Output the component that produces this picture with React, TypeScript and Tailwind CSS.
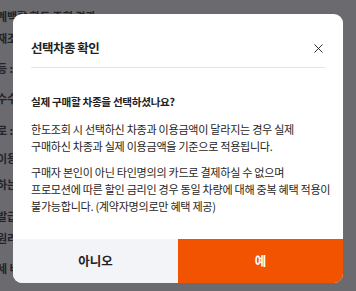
import { X } from "lucide-react";

const bgLines = [
  { t: "계백할 한도 조회 결과", y: "mt-[8px]" },
  { t: "재조회 가능 여부 안내", y: "mt-[6px]" },
  { t: "등 : 프로모션 적용 불가", y: "mt-[14px]" },
  { t: "수수료 안내", y: "mt-[14px]" },
  { t: "로 : 일시불 결제", y: "mt-[16px]" },
  { t: "이용 금액 안내", y: "mt-[12px]" },
  { t: "하는 경우 적용", y: "mt-[10px]" },
  { t: "발급 관련 안내", y: "mt-[16px]" },
  { t: "원리금 상환 안내", y: "mt-[6px]" },
  { t: "세 비용이 추가로 발생할 수 있습니다.", y: "mt-[14px]" },
];

export default function App() {
  return (
    <div className="relative w-[356px] h-[291px] overflow-hidden bg-white font-['Noto_Sans_CJK_KR','Noto_Sans',sans-serif]">
      {/* page behind the dialog */}
      <div className="flex flex-col text-[11px] leading-[16px] text-[#444] font-bold -ml-[3px]">
        {bgLines.map((l, i) => (
          <div key={i} className={l.y}>{l.t}</div>
        ))}
        <div className="mt-[16px] pl-[8px]">일정 하락 시 금융거래 관련된 불이익이 발생할 수 있습니다.</div>
      </div>
      <div className="absolute inset-0 bg-[#0e0e16]/[0.62]" />

      {/* dialog */}
      <div className="absolute left-[13px] top-[14px] w-[330px] h-[269px] bg-white rounded-[9px] overflow-hidden flex flex-col text-[#222]">
        <div className="mx-[18px] pt-[25px] pb-[10px] border-b border-[#e3e3e8] flex items-center justify-between">
          <h2 className="text-[12.5px] leading-[18px] font-bold tracking-[-0.5px]">선택차종 확인</h2>
          <X size={15} strokeWidth={1.5} className="-mr-[1px] text-[#222]" />
        </div>
        <div className="px-[18px] pt-[25px] flex-1 tracking-[-0.3px]">
          <p className="text-[10.6px] leading-[17px] font-bold">실제 구매할 차종을 선택하셨나요?</p>
          <p className="mt-[11px] text-[11.1px] leading-[17px] text-[#262626] whitespace-nowrap">
            한도조회 시 선택하신 차종과 이용금액이 달라지는 경우 실제
            <br />
            구매하신 차종과 실제 이용금액을 기준으로 적용됩니다.
          </p>
          <p className="mt-[9px] text-[11.1px] leading-[17px] text-[#262626] whitespace-nowrap">
            구매자 본인이 아닌 타인명의의 카드로 결제하실 수 없으며
            <br />
            프로모션에 따른 할인 금리인 경우 동일 차량에 대해 중복 혜택 적용이
            <br />
            불가능합니다. (계약자명의로만 혜택 제공)
          </p>
        </div>
        <div className="grid grid-cols-2 h-[44px]">
          <button className="bg-[#f3f4f8] text-[12.5px] font-bold text-[#222]">아니오</button>
          <button className="bg-[#f25300] text-[12.5px] font-bold text-white">예</button>
        </div>
      </div>
    </div>
  );
}
